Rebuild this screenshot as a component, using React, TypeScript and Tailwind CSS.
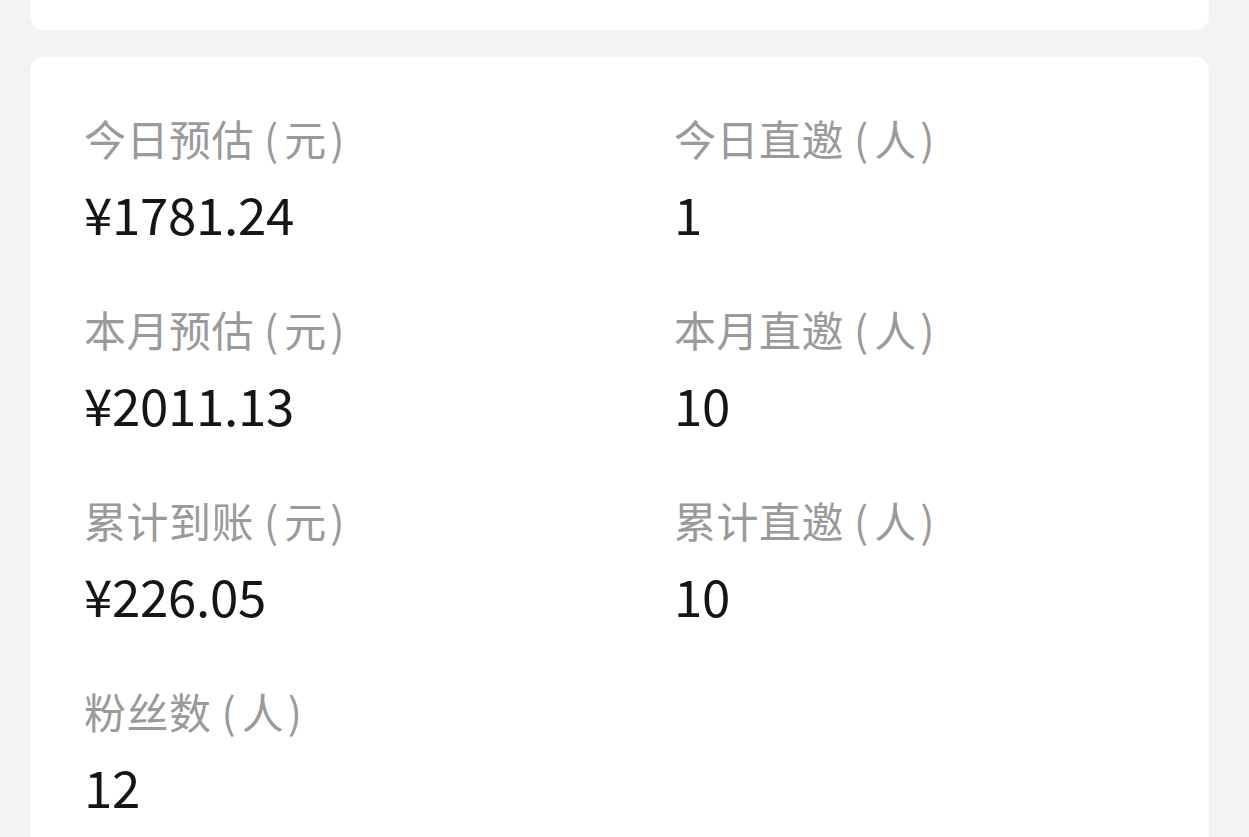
import React from "react";

const items = [
  { label: "今日预估", unit: "元", value: "¥1781.24" },
  { label: "今日直邀", unit: "人", value: "1" },
  { label: "本月预估", unit: "元", value: "¥2011.13" },
  { label: "本月直邀", unit: "人", value: "10" },
  { label: "累计到账", unit: "元", value: "¥226.05" },
  { label: "累计直邀", unit: "人", value: "10" },
  { label: "粉丝数", unit: "人", value: "12" },
];

export default function App() {
  return (
    <div
      className="w-[1249px] h-[837px] overflow-hidden bg-[#f3f3f3] pl-[30px] pr-[40px]"
      style={{ fontFamily: '"Noto Sans CJK SC", "Noto Sans", sans-serif' }}
    >
      <div className="h-[60px] -mt-[30px] bg-white rounded-[14px]" />
      <div className="mt-[27px] bg-white rounded-[14px] h-[820px] pl-[54px] pt-[51px]">
        <div className="grid grid-cols-[590px_1fr] gap-y-[41px]">
          {items.map((it) => (
            <div key={it.label} className="flex flex-col">
              <div className="text-[42px] leading-[60px] text-[#9a9a9a] whitespace-nowrap">
                <span className="tracking-[0.5px]">{it.label}</span>
                <span className="ml-[10px]">(</span>
                <span className="ml-[6px]">{it.unit}</span>
                <span className="ml-[4px]">)</span>
              </div>
              <div className="text-[51px] leading-[90px] text-[#151515] tracking-[-0.3px]">
                {it.value}
              </div>
            </div>
          ))}
        </div>
      </div>
    </div>
  );
}
